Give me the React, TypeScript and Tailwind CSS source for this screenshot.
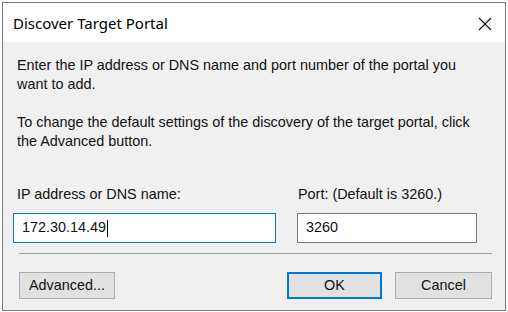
import { FC } from 'react'

const body = "font-['Liberation_Sans',Arial,sans-serif] text-[14.4px] text-[#111]"

const WinButton: FC<{ label: string; primary?: boolean; className?: string }> = ({
    label,
    primary,
    className,
}) => (
    <div
        className={`flex h-[27px] items-center justify-center bg-[#e1e1e1] ${
            primary ? 'border-2 border-[#0078d7]' : 'border border-[#adadad]'
        } ${className ?? ''}`}
    >
        <span className={body}>{label}</span>
    </div>
)

const App: FC = () => {
    return (
        <div className="h-[312px] w-[508px] overflow-hidden bg-white pl-[2px] pt-[2px]">
            <div className="flex h-[309px] w-[504px] flex-col border border-[#7a7a7a] bg-[#f0f0f0]">
                {/* title bar */}
                <div className="flex h-[39px] shrink-0 items-center justify-between bg-white pl-[10px] pr-[12px] pt-[2px]">
                    <span className="font-['Noto_Sans',sans-serif] text-[15px] text-black">
                        Discover Target Portal
                    </span>
                    <svg width="14" height="14" viewBox="0 0 14 14" className="mr-[1px]">
                        <path d="M1 1 L13 13 M13 1 L1 13" stroke="#111" strokeWidth="1.1" />
                    </svg>
                </div>

                <div className={`flex flex-1 flex-col pt-[14px] ${body}`}>
                    <p className="px-[14px] leading-[19px]">
                        Enter the IP address or DNS name and port number of the portal you
                        <br />
                        want to add.
                    </p>
                    <p className="mt-[19px] px-[14px] leading-[19px]">
                        To change the default settings of the discovery of the target portal, click
                        <br />
                        the Advanced button.
                    </p>

                    <div className="mt-[34px] flex pl-[10px]">
                        <div className="w-[263px]">
                            <div className="pl-[4px] leading-[19px]">IP address or DNS name:</div>
                            <div className="mt-[9px] flex h-[30px] items-center border border-[#0078d7] bg-white pl-[8px]">
                                <span>172.30.14.49</span>
                                <span className="ml-[1px] h-[17px] w-[1px] bg-black" />
                            </div>
                        </div>
                        <div className="ml-[21px] w-[180px]">
                            <div className="pl-[1px] leading-[19px]">Port: (Default is 3260.)</div>
                            <div className="mt-[9px] flex h-[30px] items-center border border-[#7a7a7a] bg-white pl-[8px]">
                                3260
                            </div>
                        </div>
                    </div>

                    <div className="ml-[16px] mr-[13px] mt-[10px] h-[1px] bg-[#a0a0a0]" />

                    <div className="mt-[18px] flex pl-[16px]">
                        <WinButton label="Advanced..." className="w-[96px]" />
                        <WinButton label="OK" primary className="ml-[172px] w-[95px]" />
                        <WinButton label="Cancel" className="ml-[13px] w-[97px]" />
                    </div>
                </div>
            </div>
        </div>
    )
}

export default App
